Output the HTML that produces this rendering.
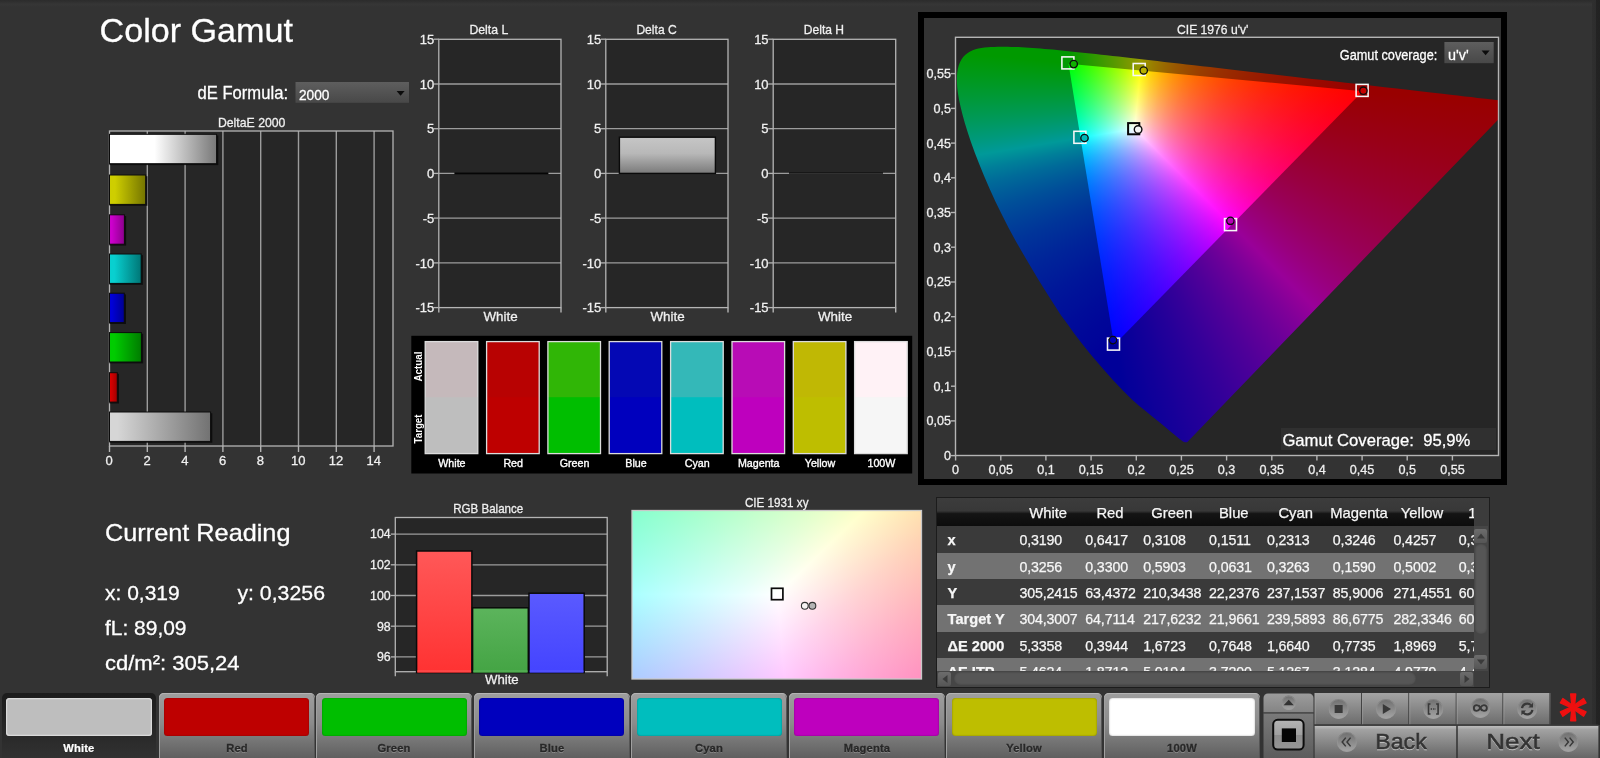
<!DOCTYPE html>
<html lang="en"><head><meta charset="utf-8"><title>Color Gamut</title><style>
html,body{margin:0;padding:0}
body{background:#333;width:1600px;height:758px;position:relative;overflow:hidden;font-family:"Liberation Sans",sans-serif}
#topstrip{position:absolute;left:0;top:0;width:1600px;height:7px;background:linear-gradient(#2c2c2c,#2f2f2f 25%,#363636 60%,#333)}
#rs1{position:absolute;left:1592px;top:0;width:8px;height:725px;background:linear-gradient(90deg,#2f2f2f,#2d2d2d 45%,#232323 55%,#222)}
#ciebox{position:absolute;left:918.3px;top:11.9px;width:588.4px;height:473.4px;background:#000}
#ciebox div{position:absolute;left:5.9px;top:5.7px;width:576.4px;height:461.6px;background:#333}
#c76,#c31{position:absolute;background:#262626;overflow:hidden}
.iso{position:absolute;left:0;top:0;width:100%;height:100%;isolation:isolate;background:#000}
.ch{position:absolute;left:0;top:0;width:100%;height:100%;mix-blend-mode:screen}
.cg{position:absolute;left:0;top:0;width:100%;height:100%}
#tblbox{position:absolute;left:936px;top:497.2px;width:553.7px;height:190.6px;background:#3c3c3c;border:1.5px solid #1c1c1c;box-sizing:border-box;overflow:hidden}
#tbl{position:absolute;left:0;top:0;width:536.5px;height:172.6px;overflow:hidden;white-space:nowrap;font-size:14.2px;color:#f6f6f6;-webkit-text-stroke:.25px #f6f6f6;will-change:transform}
#tbl>div{height:26.4px;line-height:29.4px;white-space:nowrap;width:700px}
#tbl .th{height:28.2px;line-height:30.4px;background:linear-gradient(#3c3c3c,#383838 46%,#141414 56%,#0c0c0c);font-size:14.8px}
#tbl span{display:inline-block;box-sizing:border-box;vertical-align:top}
#tbl .rl{width:78.2px;padding-left:10.6px;font-weight:bold;font-size:14.6px;letter-spacing:0}
#tbl .hc{text-align:center}
#tbl .tc{padding-left:4.2px;letter-spacing:-.12px}
#tbl .dk{background:#3a3a3a}
#tbl .lt{background:#727272}
#vs{position:absolute;left:536.5px;top:28.2px;width:14.5px;height:144.4px;background:#464646}
#hs{position:absolute;left:0;top:172.5px;width:536.5px;height:16px;background:#464646}
#vs .sb,#hs .sb{position:absolute;width:13px;height:14px;background:linear-gradient(#6c6c6c,#565656);border-radius:2px;overflow:hidden}
#vs .sb{left:.7px}
#vs .thumb{position:absolute;left:1.2px;width:12px;background:#565656;border-radius:5px;box-shadow:inset 0 0 2px #3a3a3a}
#hs .thumb{position:absolute;background:#565656;border-radius:6px;box-shadow:inset 0 0 2px #3a3a3a}
.pb{position:absolute;top:693.4px;width:156px;height:66px;border-radius:5px 5px 0 0;background:linear-gradient(#9e9e9e,#8c8c8c 45%,#5e5e5e);box-shadow:inset 0 1px 0 #b4b4b4,inset 1px 0 0 #a0a0a0,inset -1px 0 0 #555}
.pb.sel{margin-left:1.2px;width:153.6px;background:linear-gradient(#1c1c1c,#262626 50%,#323232);box-shadow:none}
.ps{position:absolute;left:5.6px;top:5.1px;width:145.2px;height:37.7px;border-radius:3.5px;box-shadow:inset 0 0 2px rgba(0,0,0,.35)}
.pb.sel .ps{left:3.8px;top:5.1px;width:146px;height:37.7px;box-shadow:inset 0 0 0 1.2px #dadada}
.pl{will-change:transform;position:absolute;left:0;width:100%;top:47.4px;text-align:center;font-weight:bold;font-size:11.2px;line-height:14px;color:#282828;-webkit-text-stroke:.3px #282828;text-shadow:0 1px 0 rgba(190,190,190,.5);letter-spacing:.15px}
.pb.sel .pl{color:#fff;-webkit-text-stroke:.2px #fff;text-shadow:none}
</style></head><body>
<div id="topstrip"></div><div id="rs1"></div>
<div id="ciebox"><div></div></div>
<div id="c76" style="left:955.5px;top:37.3px;width:543.0px;height:418.2px">
<div class="iso" style="clip-path:polygon(232.1px 404.5px,232.0px 404.6px,231.8px 404.7px,231.5px 404.9px,230.9px 405.0px,230.3px 405.0px,229.5px 404.9px,228.5px 404.6px,227.4px 404.1px,226.2px 403.3px,224.8px 402.2px,223.1px 400.9px,221.1px 399.2px,218.7px 397.3px,215.9px 394.9px,212.6px 392.1px,208.8px 389.0px,204.6px 385.4px,199.9px 381.6px,194.9px 377.6px,189.5px 373.3px,183.2px 368.2px,175.9px 361.6px,166.9px 352.7px,156.5px 341.6px,145.5px 329.2px,135.0px 316.9px,126.0px 305.7px,118.5px 295.9px,112.0px 286.6px,105.6px 278.2px,98.7px 267.5px,91.2px 255.7px,83.4px 243.1px,75.5px 230.0px,67.7px 216.8px,60.2px 203.6px,53.0px 190.4px,46.3px 177.3px,39.9px 164.2px,34.1px 151.4px,28.7px 138.9px,23.8px 127.0px,19.4px 115.6px,15.5px 104.9px,12.1px 94.8px,9.3px 85.6px,6.9px 77.0px,5.0px 69.2px,3.5px 62.2px,2.4px 55.7px,1.7px 49.9px,1.4px 44.6px,1.4px 39.8px,1.7px 35.4px,2.4px 31.5px,3.3px 28.0px,4.6px 24.8px,6.1px 22.0px,7.9px 19.5px,9.9px 17.4px,12.2px 15.6px,14.6px 14.1px,17.2px 12.9px,20.0px 11.9px,22.8px 11.2px,25.9px 10.7px,29.0px 10.3px,32.2px 10.0px,35.4px 9.8px,38.8px 9.6px,42.2px 9.5px,45.6px 9.5px,49.0px 9.5px,52.3px 9.5px,55.8px 9.6px,59.2px 9.7px,62.7px 9.8px,66.2px 10.0px,69.8px 10.2px,73.5px 10.4px,77.3px 10.7px,81.1px 10.9px,85.0px 11.2px,89.0px 11.6px,93.1px 11.9px,97.3px 12.3px,101.6px 12.7px,106.0px 13.2px,110.5px 13.6px,115.1px 14.1px,119.9px 14.6px,124.8px 15.1px,129.8px 15.6px,135.0px 16.2px,140.3px 16.8px,145.8px 17.4px,151.3px 18.0px,157.1px 18.7px,163.0px 19.3px,169.1px 20.0px,175.3px 20.7px,181.7px 21.4px,188.3px 22.2px,195.0px 22.9px,201.9px 23.7px,208.9px 24.6px,216.1px 25.4px,223.5px 26.2px,231.0px 27.1px,238.7px 28.0px,246.6px 28.9px,254.6px 29.8px,262.7px 30.7px,271.0px 31.7px,279.4px 32.7px,287.9px 33.6px,296.5px 34.6px,305.2px 35.6px,313.9px 36.6px,322.7px 37.6px,331.3px 38.6px,339.8px 39.6px,348.2px 40.6px,356.7px 41.6px,365.2px 42.5px,373.8px 43.5px,382.3px 44.5px,390.4px 45.4px,397.7px 46.3px,404.3px 47.0px,411.1px 47.8px,419.1px 48.7px,429.3px 49.9px,441.4px 51.3px,454.3px 52.8px,466.7px 54.2px,477.7px 55.5px,486.9px 56.5px,495.0px 57.4px,502.3px 58.3px,509.2px 59.1px,515.8px 59.8px,522.0px 60.6px,527.5px 61.2px,532.4px 61.8px,536.7px 62.2px,540.4px 62.7px,543.6px 63.0px,552.9px 63.0px,563.2px 60.9px)">
<div class="ch" style="background:rgb(153,0,0)"><div class="cg" style="clip-path:polygon(180.5px 93.1px,645.5px -4886.4px,-5309.5px -5019.8px,-4753.4px 912.2px);background:conic-gradient(from 178.076deg at 158.57px 307.56px,rgb(0,0,0) 172.720deg,rgb(4,0,0) 173.182deg,rgb(8,0,0) 173.654deg,rgb(12,0,0) 174.136deg,rgb(16,0,0) 174.630deg,rgb(21,0,0) 175.134deg,rgb(25,0,0) 175.650deg,rgb(30,0,0) 176.178deg,rgb(35,0,0) 176.718deg,rgb(40,0,0) 177.270deg,rgb(46,0,0) 177.835deg,rgb(51,0,0) 178.414deg,rgb(57,0,0) 179.005deg,rgb(63,0,0) 179.611deg,rgb(70,0,0) 180.230deg,rgb(76,0,0) 180.864deg,rgb(83,0,0) 181.513deg,rgb(90,0,0) 182.177deg,rgb(98,0,0) 182.857deg,rgb(106,0,0) 183.552deg,rgb(115,0,0) 184.264deg,rgb(123,0,0) 184.992deg,rgb(133,0,0) 185.737deg,rgb(143,0,0) 186.500deg,rgb(153,0,0) 187.280deg)"></div><div class="cg" style="clip-path:polygon(178.8px 91.8px,3723.3px 3618.4px,-2103.2px 7236.2px,-4753.7px 910.7px);background:conic-gradient(from 332.826deg at 113.01px 26.36px,rgb(153,0,0) 162.029deg,rgb(127,0,0) 166.073deg,rgb(107,0,0) 169.639deg,rgb(92,0,0) 172.785deg,rgb(79,0,0) 175.563deg,rgb(69,0,0) 178.025deg,rgb(60,0,0) 180.213deg,rgb(52,0,0) 182.166deg,rgb(46,0,0) 183.915deg,rgb(40,0,0) 185.488deg,rgb(35,0,0) 186.908deg,rgb(31,0,0) 188.196deg,rgb(27,0,0) 189.367deg,rgb(23,0,0) 190.436deg,rgb(20,0,0) 191.415deg,rgb(17,0,0) 192.314deg,rgb(15,0,0) 193.143deg,rgb(12,0,0) 193.908deg,rgb(10,0,0) 194.618deg,rgb(8,0,0) 195.277deg,rgb(6,0,0) 195.890deg,rgb(5,0,0) 196.463deg,rgb(3,0,0) 196.998deg,rgb(1,0,0) 197.500deg,rgb(0,0,0) 197.971deg)"></div></div>
<div class="ch" style="background:rgb(0,153,0)"><div class="cg" style="clip-path:polygon(176.7px 91.8px,645.5px -4886.4px,7231.2px -2460.4px,3722.2px 3619.5px);background:conic-gradient(from 204.891deg at 158.57px 307.56px,rgb(0,153,0) 160.464deg,rgb(0,125,0) 162.902deg,rgb(0,104,0) 165.277deg,rgb(0,87,0) 167.583deg,rgb(0,75,0) 169.818deg,rgb(0,64,0) 171.977deg,rgb(0,56,0) 174.058deg,rgb(0,48,0) 176.061deg,rgb(0,42,0) 177.986deg,rgb(0,37,0) 179.831deg,rgb(0,32,0) 181.600deg,rgb(0,28,0) 183.293deg,rgb(0,24,0) 184.912deg,rgb(0,21,0) 186.460deg,rgb(0,18,0) 187.939deg,rgb(0,16,0) 189.351deg,rgb(0,13,0) 190.700deg,rgb(0,11,0) 191.989deg,rgb(0,9,0) 193.219deg,rgb(0,7,0) 194.395deg,rgb(0,6,0) 195.517deg,rgb(0,4,0) 196.591deg,rgb(0,3,0) 197.616deg,rgb(0,1,0) 198.597deg,rgb(0,0,0) 199.536deg)"></div><div class="cg" style="clip-path:polygon(178.8px 91.8px,-4753.7px 910.7px,-2103.2px 7236.2px,3723.3px 3618.4px);background:conic-gradient(from 62.500deg at 407.22px 53.89px,rgb(0,0,0) 161.927deg,rgb(0,1,0) 162.863deg,rgb(0,3,0) 163.838deg,rgb(0,5,0) 164.851deg,rgb(0,6,0) 165.907deg,rgb(0,8,0) 167.006deg,rgb(0,10,0) 168.150deg,rgb(0,12,0) 169.341deg,rgb(0,15,0) 170.581deg,rgb(0,17,0) 171.871deg,rgb(0,20,0) 173.215deg,rgb(0,23,0) 174.612deg,rgb(0,27,0) 176.066deg,rgb(0,31,0) 177.576deg,rgb(0,35,0) 179.146deg,rgb(0,40,0) 180.775deg,rgb(0,46,0) 182.464deg,rgb(0,52,0) 184.213deg,rgb(0,60,0) 186.023deg,rgb(0,69,0) 187.892deg,rgb(0,79,0) 189.821deg,rgb(0,92,0) 191.805deg,rgb(0,107,0) 193.845deg,rgb(0,127,0) 195.935deg,rgb(0,153,0) 198.073deg)"></div></div>
<div class="ch" style="background:rgb(0,0,153)"><div class="cg" style="clip-path:polygon(177.2px 93.2px,3723.3px 3618.4px,7231.2px -2460.4px,644.0px -4886.5px);background:conic-gradient(from 295.100deg at 113.01px 26.36px,rgb(0,0,0) 160.245deg,rgb(0,0,1) 160.738deg,rgb(0,0,3) 161.264deg,rgb(0,0,4) 161.826deg,rgb(0,0,6) 162.428deg,rgb(0,0,7) 163.075deg,rgb(0,0,9) 163.772deg,rgb(0,0,11) 164.524deg,rgb(0,0,13) 165.337deg,rgb(0,0,16) 166.221deg,rgb(0,0,18) 167.182deg,rgb(0,0,21) 168.232deg,rgb(0,0,24) 169.382deg,rgb(0,0,28) 170.647deg,rgb(0,0,32) 172.043deg,rgb(0,0,37) 173.590deg,rgb(0,0,42) 175.311deg,rgb(0,0,48) 177.232deg,rgb(0,0,56) 179.387deg,rgb(0,0,64) 181.814deg,rgb(0,0,75) 184.556deg,rgb(0,0,87) 187.664deg,rgb(0,0,104) 191.194deg,rgb(0,0,125) 195.205deg,rgb(0,0,153) 199.755deg)"></div><div class="cg" style="clip-path:polygon(178.8px 91.8px,-4753.7px 910.7px,-5309.5px -5019.8px,645.5px -4886.4px);background:conic-gradient(from 87.960deg at 407.22px 53.89px,rgb(0,0,153) 172.614deg,rgb(0,0,143) 173.383deg,rgb(0,0,133) 174.137deg,rgb(0,0,123) 174.877deg,rgb(0,0,115) 175.602deg,rgb(0,0,106) 176.312deg,rgb(0,0,98) 177.008deg,rgb(0,0,90) 177.691deg,rgb(0,0,83) 178.359deg,rgb(0,0,76) 179.015deg,rgb(0,0,70) 179.656deg,rgb(0,0,63) 180.285deg,rgb(0,0,57) 180.901deg,rgb(0,0,51) 181.505deg,rgb(0,0,46) 182.096deg,rgb(0,0,40) 182.675deg,rgb(0,0,35) 183.242deg,rgb(0,0,30) 183.798deg,rgb(0,0,25) 184.343deg,rgb(0,0,21) 184.876deg,rgb(0,0,16) 185.399deg,rgb(0,0,12) 185.911deg,rgb(0,0,8) 186.413deg,rgb(0,0,4) 186.904deg,rgb(0,0,0) 187.386deg)"></div></div>
</div>
<div class="iso" style="clip-path:polygon(407.2px 53.9px,113.0px 26.4px,158.6px 307.6px)">
<div class="ch" style="background:rgb(255,0,0)"><div class="cg" style="clip-path:polygon(180.5px 93.1px,645.5px -4886.4px,-5309.5px -5019.8px,-4753.4px 912.2px);background:conic-gradient(from 178.076deg at 158.57px 307.56px,rgb(0,0,0) 172.720deg,rgb(6,0,0) 173.182deg,rgb(13,0,0) 173.654deg,rgb(20,0,0) 174.136deg,rgb(27,0,0) 174.630deg,rgb(35,0,0) 175.134deg,rgb(42,0,0) 175.650deg,rgb(50,0,0) 176.178deg,rgb(58,0,0) 176.718deg,rgb(67,0,0) 177.270deg,rgb(76,0,0) 177.835deg,rgb(85,0,0) 178.414deg,rgb(95,0,0) 179.005deg,rgb(105,0,0) 179.611deg,rgb(116,0,0) 180.230deg,rgb(127,0,0) 180.864deg,rgb(139,0,0) 181.513deg,rgb(151,0,0) 182.177deg,rgb(163,0,0) 182.857deg,rgb(177,0,0) 183.552deg,rgb(191,0,0) 184.264deg,rgb(206,0,0) 184.992deg,rgb(221,0,0) 185.737deg,rgb(238,0,0) 186.500deg,rgb(255,0,0) 187.280deg)"></div><div class="cg" style="clip-path:polygon(178.8px 91.8px,3723.3px 3618.4px,-2103.2px 7236.2px,-4753.7px 910.7px);background:conic-gradient(from 332.826deg at 113.01px 26.36px,rgb(255,0,0) 162.029deg,rgb(212,0,0) 166.073deg,rgb(179,0,0) 169.639deg,rgb(153,0,0) 172.785deg,rgb(132,0,0) 175.563deg,rgb(114,0,0) 178.025deg,rgb(100,0,0) 180.213deg,rgb(87,0,0) 182.166deg,rgb(76,0,0) 183.915deg,rgb(67,0,0) 185.488deg,rgb(59,0,0) 186.908deg,rgb(51,0,0) 188.196deg,rgb(45,0,0) 189.367deg,rgb(39,0,0) 190.436deg,rgb(34,0,0) 191.415deg,rgb(29,0,0) 192.314deg,rgb(25,0,0) 193.143deg,rgb(21,0,0) 193.908deg,rgb(17,0,0) 194.618deg,rgb(14,0,0) 195.277deg,rgb(10,0,0) 195.890deg,rgb(8,0,0) 196.463deg,rgb(5,0,0) 196.998deg,rgb(2,0,0) 197.500deg,rgb(0,0,0) 197.971deg)"></div></div>
<div class="ch" style="background:rgb(0,255,0)"><div class="cg" style="clip-path:polygon(176.7px 91.8px,645.5px -4886.4px,7231.2px -2460.4px,3722.2px 3619.5px);background:conic-gradient(from 204.891deg at 158.57px 307.56px,rgb(0,255,0) 160.464deg,rgb(0,208,0) 162.902deg,rgb(0,173,0) 165.277deg,rgb(0,146,0) 167.583deg,rgb(0,124,0) 169.818deg,rgb(0,107,0) 171.977deg,rgb(0,93,0) 174.058deg,rgb(0,81,0) 176.061deg,rgb(0,70,0) 177.986deg,rgb(0,61,0) 179.831deg,rgb(0,54,0) 181.600deg,rgb(0,47,0) 183.293deg,rgb(0,41,0) 184.912deg,rgb(0,35,0) 186.460deg,rgb(0,31,0) 187.939deg,rgb(0,26,0) 189.351deg,rgb(0,22,0) 190.700deg,rgb(0,19,0) 191.989deg,rgb(0,15,0) 193.219deg,rgb(0,12,0) 194.395deg,rgb(0,9,0) 195.517deg,rgb(0,7,0) 196.591deg,rgb(0,4,0) 197.616deg,rgb(0,2,0) 198.597deg,rgb(0,0,0) 199.536deg)"></div><div class="cg" style="clip-path:polygon(178.8px 91.8px,-4753.7px 910.7px,-2103.2px 7236.2px,3723.3px 3618.4px);background:conic-gradient(from 62.500deg at 407.22px 53.89px,rgb(0,0,0) 161.927deg,rgb(0,2,0) 162.863deg,rgb(0,5,0) 163.838deg,rgb(0,8,0) 164.851deg,rgb(0,10,0) 165.907deg,rgb(0,14,0) 167.006deg,rgb(0,17,0) 168.150deg,rgb(0,21,0) 169.341deg,rgb(0,25,0) 170.581deg,rgb(0,29,0) 171.871deg,rgb(0,34,0) 173.215deg,rgb(0,39,0) 174.612deg,rgb(0,45,0) 176.066deg,rgb(0,51,0) 177.576deg,rgb(0,59,0) 179.146deg,rgb(0,67,0) 180.775deg,rgb(0,76,0) 182.464deg,rgb(0,87,0) 184.213deg,rgb(0,100,0) 186.023deg,rgb(0,114,0) 187.892deg,rgb(0,132,0) 189.821deg,rgb(0,153,0) 191.805deg,rgb(0,179,0) 193.845deg,rgb(0,212,0) 195.935deg,rgb(0,255,0) 198.073deg)"></div></div>
<div class="ch" style="background:rgb(0,0,255)"><div class="cg" style="clip-path:polygon(177.2px 93.2px,3723.3px 3618.4px,7231.2px -2460.4px,644.0px -4886.5px);background:conic-gradient(from 295.100deg at 113.01px 26.36px,rgb(0,0,0) 160.245deg,rgb(0,0,2) 160.738deg,rgb(0,0,4) 161.264deg,rgb(0,0,7) 161.826deg,rgb(0,0,9) 162.428deg,rgb(0,0,12) 163.075deg,rgb(0,0,15) 163.772deg,rgb(0,0,19) 164.524deg,rgb(0,0,22) 165.337deg,rgb(0,0,26) 166.221deg,rgb(0,0,31) 167.182deg,rgb(0,0,35) 168.232deg,rgb(0,0,41) 169.382deg,rgb(0,0,47) 170.647deg,rgb(0,0,54) 172.043deg,rgb(0,0,61) 173.590deg,rgb(0,0,70) 175.311deg,rgb(0,0,81) 177.232deg,rgb(0,0,93) 179.387deg,rgb(0,0,107) 181.814deg,rgb(0,0,124) 184.556deg,rgb(0,0,146) 187.664deg,rgb(0,0,173) 191.194deg,rgb(0,0,208) 195.205deg,rgb(0,0,255) 199.755deg)"></div><div class="cg" style="clip-path:polygon(178.8px 91.8px,-4753.7px 910.7px,-5309.5px -5019.8px,645.5px -4886.4px);background:conic-gradient(from 87.960deg at 407.22px 53.89px,rgb(0,0,255) 172.614deg,rgb(0,0,238) 173.383deg,rgb(0,0,221) 174.137deg,rgb(0,0,206) 174.877deg,rgb(0,0,191) 175.602deg,rgb(0,0,177) 176.312deg,rgb(0,0,163) 177.008deg,rgb(0,0,151) 177.691deg,rgb(0,0,139) 178.359deg,rgb(0,0,127) 179.015deg,rgb(0,0,116) 179.656deg,rgb(0,0,105) 180.285deg,rgb(0,0,95) 180.901deg,rgb(0,0,85) 181.505deg,rgb(0,0,76) 182.096deg,rgb(0,0,67) 182.675deg,rgb(0,0,59) 183.242deg,rgb(0,0,50) 183.798deg,rgb(0,0,42) 184.343deg,rgb(0,0,35) 184.876deg,rgb(0,0,27) 185.399deg,rgb(0,0,20) 185.911deg,rgb(0,0,13) 186.413deg,rgb(0,0,6) 186.904deg,rgb(0,0,0) 187.386deg)"></div></div>
</div>
</div>
<div id="c31" style="left:632.0px;top:510.5px;width:289.5px;height:168.5px">
<div class="iso">
<div class="ch" style="background:rgb(255,0,0)"><div class="cg" style="clip-path:polygon(146.6px 85.0px,3747.8px -3383.4px,-2664.6px -6870.3px,-4854.9px 93.9px);background:conic-gradient(from 215.807deg at -796.98px 990.08px,rgb(0,0,0) 169.706deg,rgb(4,0,0) 170.260deg,rgb(9,0,0) 170.832deg,rgb(14,0,0) 171.423deg,rgb(19,0,0) 172.035deg,rgb(24,0,0) 172.668deg,rgb(29,0,0) 173.323deg,rgb(35,0,0) 174.001deg,rgb(42,0,0) 174.704deg,rgb(49,0,0) 175.432deg,rgb(56,0,0) 176.187deg,rgb(64,0,0) 176.970deg,rgb(72,0,0) 177.781deg,rgb(81,0,0) 178.623deg,rgb(90,0,0) 179.497deg,rgb(101,0,0) 180.403deg,rgb(112,0,0) 181.344deg,rgb(124,0,0) 182.321deg,rgb(138,0,0) 183.336deg,rgb(153,0,0) 184.389deg,rgb(169,0,0) 185.483deg,rgb(187,0,0) 186.619deg,rgb(207,0,0) 187.798deg,rgb(229,0,0) 189.023deg,rgb(255,0,0) 190.294deg)"></div><div class="cg" style="clip-path:polygon(145.0px 83.5px,546.3px 5067.4px,-4936.1px 5600.1px,-4854.9px 92.4px);background:conic-gradient(from 10.455deg at 71.52px -829.72px,rgb(255,0,0) 164.942deg,rgb(230,0,0) 167.481deg,rgb(207,0,0) 169.833deg,rgb(187,0,0) 172.012deg,rgb(169,0,0) 174.029deg,rgb(153,0,0) 175.899deg,rgb(138,0,0) 177.633deg,rgb(125,0,0) 179.242deg,rgb(113,0,0) 180.737deg,rgb(101,0,0) 182.128deg,rgb(91,0,0) 183.424deg,rgb(81,0,0) 184.633deg,rgb(72,0,0) 185.763deg,rgb(64,0,0) 186.821deg,rgb(56,0,0) 187.812deg,rgb(49,0,0) 188.742deg,rgb(42,0,0) 189.616deg,rgb(36,0,0) 190.439deg,rgb(30,0,0) 191.214deg,rgb(24,0,0) 191.946deg,rgb(19,0,0) 192.637deg,rgb(14,0,0) 193.292deg,rgb(9,0,0) 193.912deg,rgb(4,0,0) 194.500deg,rgb(0,0,0) 195.058deg)"></div></div>
<div class="ch" style="background:rgb(0,255,0)"><div class="cg" style="clip-path:polygon(143.4px 82.2px,3747.8px -3383.4px,7158.6px 2740.5px,544.8px 5067.5px);background:conic-gradient(from 239.159deg at -796.98px 990.08px,rgb(0,255,0) 166.941deg,rgb(0,212,0) 169.235deg,rgb(0,179,0) 171.338deg,rgb(0,152,0) 173.269deg,rgb(0,131,0) 175.044deg,rgb(0,114,0) 176.678deg,rgb(0,99,0) 178.185deg,rgb(0,87,0) 179.578deg,rgb(0,76,0) 180.866deg,rgb(0,67,0) 182.061deg,rgb(0,58,0) 183.172deg,rgb(0,51,0) 184.206deg,rgb(0,45,0) 185.170deg,rgb(0,39,0) 186.070deg,rgb(0,34,0) 186.913deg,rgb(0,29,0) 187.704deg,rgb(0,24,0) 188.446deg,rgb(0,21,0) 189.144deg,rgb(0,17,0) 189.802deg,rgb(0,14,0) 190.422deg,rgb(0,10,0) 191.008deg,rgb(0,8,0) 191.562deg,rgb(0,5,0) 192.088deg,rgb(0,2,0) 192.586deg,rgb(0,0,0) 193.059deg)"></div><div class="cg" style="clip-path:polygon(145.0px 83.5px,-4854.9px 92.4px,-4936.1px 5600.1px,546.3px 5067.4px);background:conic-gradient(from 81.058deg at 2040.12px 80.18px,rgb(0,0,0) 171.160deg,rgb(0,4,0) 171.629deg,rgb(0,9,0) 172.114deg,rgb(0,14,0) 172.615deg,rgb(0,19,0) 173.134deg,rgb(0,24,0) 173.670deg,rgb(0,30,0) 174.226deg,rgb(0,36,0) 174.802deg,rgb(0,42,0) 175.399deg,rgb(0,49,0) 176.018deg,rgb(0,56,0) 176.660deg,rgb(0,64,0) 177.327deg,rgb(0,72,0) 178.019deg,rgb(0,81,0) 178.737deg,rgb(0,91,0) 179.484deg,rgb(0,101,0) 180.260deg,rgb(0,113,0) 181.067deg,rgb(0,125,0) 181.907deg,rgb(0,138,0) 182.780deg,rgb(0,153,0) 183.690deg,rgb(0,169,0) 184.637deg,rgb(0,187,0) 185.624deg,rgb(0,207,0) 186.652deg,rgb(0,230,0) 187.723deg,rgb(0,255,0) 188.840deg)"></div></div>
<div class="ch" style="background:rgb(0,0,255)"><div class="cg" style="clip-path:polygon(142.9px 83.5px,546.3px 5067.4px,7158.6px 2740.5px,3746.8px -3384.5px);background:conic-gradient(from 325.102deg at 71.52px -829.72px,rgb(0,0,0) 149.705deg,rgb(0,0,2) 150.614deg,rgb(0,0,5) 151.586deg,rgb(0,0,8) 152.628deg,rgb(0,0,10) 153.748deg,rgb(0,0,13) 154.952deg,rgb(0,0,17) 156.251deg,rgb(0,0,20) 157.653deg,rgb(0,0,24) 159.170deg,rgb(0,0,29) 160.815deg,rgb(0,0,34) 162.601deg,rgb(0,0,39) 164.542deg,rgb(0,0,45) 166.656deg,rgb(0,0,51) 168.959deg,rgb(0,0,58) 171.471deg,rgb(0,0,67) 174.208deg,rgb(0,0,76) 177.189deg,rgb(0,0,87) 180.430deg,rgb(0,0,99) 183.942deg,rgb(0,0,114) 187.731deg,rgb(0,0,131) 191.794deg,rgb(0,0,152) 196.118deg,rgb(0,0,179) 200.673deg,rgb(0,0,212) 205.417deg,rgb(0,0,255) 210.295deg)"></div><div class="cg" style="clip-path:polygon(145.0px 83.5px,-4854.9px 92.4px,-2664.6px -6870.3px,3747.8px -3383.4px);background:conic-gradient(from 102.352deg at 2040.12px 80.18px,rgb(0,0,255) 167.546deg,rgb(0,0,230) 168.694deg,rgb(0,0,207) 169.839deg,rgb(0,0,187) 170.977deg,rgb(0,0,169) 172.110deg,rgb(0,0,153) 173.235deg,rgb(0,0,138) 174.353deg,rgb(0,0,124) 175.461deg,rgb(0,0,112) 176.561deg,rgb(0,0,101) 177.650deg,rgb(0,0,90) 178.729deg,rgb(0,0,81) 179.796deg,rgb(0,0,72) 180.852deg,rgb(0,0,64) 181.895deg,rgb(0,0,56) 182.926deg,rgb(0,0,49) 183.943deg,rgb(0,0,42) 184.947deg,rgb(0,0,35) 185.936deg,rgb(0,0,29) 186.912deg,rgb(0,0,24) 187.873deg,rgb(0,0,19) 188.819deg,rgb(0,0,14) 189.750deg,rgb(0,0,9) 190.667deg,rgb(0,0,4) 191.568deg,rgb(0,0,0) 192.454deg)"></div></div>
</div></div>
<svg width="1600" height="758" viewBox="0 0 1600 758" style="position:absolute;left:0;top:0;will-change:transform;font-family:'Liberation Sans',sans-serif"><defs><linearGradient id="dd" x1="0" y1="0" x2="0" y2="1"><stop offset="0" stop-color="#5e5e5e"/><stop offset="1" stop-color="#484848"/></linearGradient><linearGradient id="bw" x1="0" y1="0" x2="1" y2="0"><stop offset="0" stop-color="#ffffff"/><stop offset="0.42" stop-color="#ffffff"/><stop offset="1" stop-color="#787878"/></linearGradient><linearGradient id="by" x1="0" y1="0" x2="1" y2="0"><stop offset="0" stop-color="#cece00"/><stop offset="0.15" stop-color="#cece00"/><stop offset="1" stop-color="#747400"/></linearGradient><linearGradient id="bm" x1="0" y1="0" x2="1" y2="0"><stop offset="0" stop-color="#cc00cc"/><stop offset="0.15" stop-color="#cc00cc"/><stop offset="1" stop-color="#8c008c"/></linearGradient><linearGradient id="bc" x1="0" y1="0" x2="1" y2="0"><stop offset="0" stop-color="#08d0d0"/><stop offset="0.15" stop-color="#08d0d0"/><stop offset="1" stop-color="#007676"/></linearGradient><linearGradient id="bb" x1="0" y1="0" x2="1" y2="0"><stop offset="0" stop-color="#0000d8"/><stop offset="0.15" stop-color="#0000d8"/><stop offset="1" stop-color="#000090"/></linearGradient><linearGradient id="bg" x1="0" y1="0" x2="1" y2="0"><stop offset="0" stop-color="#00cc00"/><stop offset="0.15" stop-color="#00cc00"/><stop offset="1" stop-color="#007c00"/></linearGradient><linearGradient id="br" x1="0" y1="0" x2="1" y2="0"><stop offset="0" stop-color="#d80000"/><stop offset="0.15" stop-color="#d80000"/><stop offset="1" stop-color="#a00000"/></linearGradient><linearGradient id="bk" x1="0" y1="0" x2="1" y2="0"><stop offset="0" stop-color="#d6d6d6"/><stop offset="0.08" stop-color="#d6d6d6"/><stop offset="1" stop-color="#727272"/></linearGradient><linearGradient id="dcb" x1="0" y1="0" x2="0" y2="1"><stop offset="0" stop-color="#c6c6c6"/><stop offset="0.45" stop-color="#b8b8b8"/><stop offset="1" stop-color="#7a7a7a"/></linearGradient><linearGradient id="rr" x1="0" y1="0" x2="0" y2="1"><stop offset="0" stop-color="#ff5858"/><stop offset="1" stop-color="#ff3232"/></linearGradient><linearGradient id="rg" x1="0" y1="0" x2="0" y2="1"><stop offset="0" stop-color="#5cb45c"/><stop offset="1" stop-color="#44a444"/></linearGradient><linearGradient id="rb" x1="0" y1="0" x2="0" y2="1"><stop offset="0" stop-color="#5a5aff"/><stop offset="1" stop-color="#4444ff"/></linearGradient></defs>
<text x="99.5" y="42.3" font-size="32.5" text-anchor="start" fill="#fff" font-weight="normal" textLength="193.5" lengthAdjust="spacingAndGlyphs" stroke="#fff" stroke-width="0.28">Color Gamut</text>
<text x="197.5" y="99.2" font-size="17.5" text-anchor="start" fill="#fff" font-weight="normal" textLength="90.5" lengthAdjust="spacingAndGlyphs" stroke="#fff" stroke-width="0.28">dE Formula:</text>
<rect x="295.5" y="82" width="113.5" height="20.8" fill="url(#dd)"/>
<text x="299.0" y="99.6" font-size="14.5" text-anchor="start" fill="#fff" font-weight="normal" textLength="30.5" lengthAdjust="spacingAndGlyphs" stroke="#fff" stroke-width="0.28">2000</text>
<path d="M396.6 91h8l-4 4.8z" fill="#0c0c0c"/>
<text x="251.7" y="126.6" font-size="13" text-anchor="middle" fill="#f0f0f0" font-weight="normal" textLength="67.5" lengthAdjust="spacingAndGlyphs" stroke="#f0f0f0" stroke-width="0.28">DeltaE 2000</text>
<rect x="109.5" y="131.0" width="283.5" height="315.0" fill="#262626"/>
<line x1="147.3" y1="131.0" x2="147.3" y2="446.0" stroke="#9c9c9c" stroke-width="1.4"/>
<line x1="185.1" y1="131.0" x2="185.1" y2="446.0" stroke="#9c9c9c" stroke-width="1.4"/>
<line x1="222.9" y1="131.0" x2="222.9" y2="446.0" stroke="#9c9c9c" stroke-width="1.4"/>
<line x1="260.7" y1="131.0" x2="260.7" y2="446.0" stroke="#9c9c9c" stroke-width="1.4"/>
<line x1="298.5" y1="131.0" x2="298.5" y2="446.0" stroke="#9c9c9c" stroke-width="1.4"/>
<line x1="336.3" y1="131.0" x2="336.3" y2="446.0" stroke="#9c9c9c" stroke-width="1.4"/>
<line x1="374.1" y1="131.0" x2="374.1" y2="446.0" stroke="#9c9c9c" stroke-width="1.4"/>
<rect x="109.5" y="131.0" width="283.5" height="315.0" fill="none" stroke="#b4b4b4" stroke-width="1.3"/>
<line x1="109.5" y1="446.0" x2="109.5" y2="452.0" stroke="#b4b4b4" stroke-width="1.4"/>
<text x="109.2" y="465.4" font-size="13" text-anchor="middle" fill="#f0f0f0" font-weight="normal" stroke="#f0f0f0" stroke-width="0.28">0</text>
<line x1="147.3" y1="446.0" x2="147.3" y2="452.0" stroke="#b4b4b4" stroke-width="1.4"/>
<text x="147.0" y="465.4" font-size="13" text-anchor="middle" fill="#f0f0f0" font-weight="normal" stroke="#f0f0f0" stroke-width="0.28">2</text>
<line x1="185.1" y1="446.0" x2="185.1" y2="452.0" stroke="#b4b4b4" stroke-width="1.4"/>
<text x="184.8" y="465.4" font-size="13" text-anchor="middle" fill="#f0f0f0" font-weight="normal" stroke="#f0f0f0" stroke-width="0.28">4</text>
<line x1="222.9" y1="446.0" x2="222.9" y2="452.0" stroke="#b4b4b4" stroke-width="1.4"/>
<text x="222.6" y="465.4" font-size="13" text-anchor="middle" fill="#f0f0f0" font-weight="normal" stroke="#f0f0f0" stroke-width="0.28">6</text>
<line x1="260.7" y1="446.0" x2="260.7" y2="452.0" stroke="#b4b4b4" stroke-width="1.4"/>
<text x="260.4" y="465.4" font-size="13" text-anchor="middle" fill="#f0f0f0" font-weight="normal" stroke="#f0f0f0" stroke-width="0.28">8</text>
<line x1="298.5" y1="446.0" x2="298.5" y2="452.0" stroke="#b4b4b4" stroke-width="1.4"/>
<text x="298.2" y="465.4" font-size="13" text-anchor="middle" fill="#f0f0f0" font-weight="normal" stroke="#f0f0f0" stroke-width="0.28">10</text>
<line x1="336.3" y1="446.0" x2="336.3" y2="452.0" stroke="#b4b4b4" stroke-width="1.4"/>
<text x="336.0" y="465.4" font-size="13" text-anchor="middle" fill="#f0f0f0" font-weight="normal" stroke="#f0f0f0" stroke-width="0.28">12</text>
<line x1="374.1" y1="446.0" x2="374.1" y2="452.0" stroke="#b4b4b4" stroke-width="1.4"/>
<text x="373.8" y="465.4" font-size="13" text-anchor="middle" fill="#f0f0f0" font-weight="normal" stroke="#f0f0f0" stroke-width="0.28">14</text>
<rect x="109.5" y="135.5" width="108.8" height="29.6" fill="#0a0a0a" opacity="0.85"/>
<rect x="109.5" y="134.3" width="107.1" height="29.4" fill="url(#bw)" stroke="#0c0c0c" stroke-width="1"/>
<rect x="109.5" y="176.2" width="37.9" height="29.6" fill="#0a0a0a" opacity="0.85"/>
<rect x="109.5" y="175.0" width="36.2" height="29.4" fill="url(#by)" stroke="#0c0c0c" stroke-width="1"/>
<rect x="109.5" y="216.0" width="16.6" height="29.6" fill="#0a0a0a" opacity="0.85"/>
<rect x="109.5" y="214.8" width="14.9" height="29.4" fill="url(#bm)" stroke="#0c0c0c" stroke-width="1"/>
<rect x="109.5" y="255.2" width="33.4" height="29.6" fill="#0a0a0a" opacity="0.85"/>
<rect x="109.5" y="254.0" width="31.7" height="29.4" fill="url(#bc)" stroke="#0c0c0c" stroke-width="1"/>
<rect x="109.5" y="294.4" width="16.5" height="29.6" fill="#0a0a0a" opacity="0.85"/>
<rect x="109.5" y="293.2" width="14.8" height="29.4" fill="url(#bb)" stroke="#0c0c0c" stroke-width="1"/>
<rect x="109.5" y="333.8" width="33.6" height="29.6" fill="#0a0a0a" opacity="0.85"/>
<rect x="109.5" y="332.6" width="31.9" height="29.4" fill="url(#bg)" stroke="#0c0c0c" stroke-width="1"/>
<rect x="109.5" y="373.9" width="9.5" height="29.6" fill="#0a0a0a" opacity="0.85"/>
<rect x="109.5" y="372.7" width="7.8" height="29.4" fill="url(#br)" stroke="#0c0c0c" stroke-width="1"/>
<rect x="109.5" y="413.2" width="102.8" height="29.6" fill="#0a0a0a" opacity="0.85"/>
<rect x="109.5" y="412.0" width="101.1" height="29.4" fill="url(#bk)" stroke="#0c0c0c" stroke-width="1"/>
<rect x="438.8" y="39.3" width="122.19999999999999" height="268.3" fill="#262626"/>
<line x1="438.8" y1="84.0" x2="561.0" y2="84.0" stroke="#9c9c9c" stroke-width="1.3"/>
<line x1="438.8" y1="128.7" x2="561.0" y2="128.7" stroke="#9c9c9c" stroke-width="1.3"/>
<line x1="438.8" y1="173.4" x2="561.0" y2="173.4" stroke="#9c9c9c" stroke-width="1.3"/>
<line x1="438.8" y1="218.1" x2="561.0" y2="218.1" stroke="#9c9c9c" stroke-width="1.3"/>
<line x1="438.8" y1="262.9" x2="561.0" y2="262.9" stroke="#9c9c9c" stroke-width="1.3"/>
<rect x="438.8" y="39.3" width="122.19999999999999" height="268.3" fill="none" stroke="#b4b4b4" stroke-width="1.3"/>
<line x1="433.8" y1="39.2" x2="438.8" y2="39.2" stroke="#b4b4b4" stroke-width="1.3"/>
<text x="434.2" y="43.8" font-size="13" text-anchor="end" fill="#f0f0f0" font-weight="normal" stroke="#f0f0f0" stroke-width="0.28">15</text>
<line x1="433.8" y1="84.0" x2="438.8" y2="84.0" stroke="#b4b4b4" stroke-width="1.3"/>
<text x="434.2" y="88.5" font-size="13" text-anchor="end" fill="#f0f0f0" font-weight="normal" stroke="#f0f0f0" stroke-width="0.28">10</text>
<line x1="433.8" y1="128.7" x2="438.8" y2="128.7" stroke="#b4b4b4" stroke-width="1.3"/>
<text x="434.2" y="133.3" font-size="13" text-anchor="end" fill="#f0f0f0" font-weight="normal" stroke="#f0f0f0" stroke-width="0.28">5</text>
<line x1="433.8" y1="173.4" x2="438.8" y2="173.4" stroke="#b4b4b4" stroke-width="1.3"/>
<text x="434.2" y="178.0" font-size="13" text-anchor="end" fill="#f0f0f0" font-weight="normal" stroke="#f0f0f0" stroke-width="0.28">0</text>
<line x1="433.8" y1="218.1" x2="438.8" y2="218.1" stroke="#b4b4b4" stroke-width="1.3"/>
<text x="434.2" y="222.7" font-size="13" text-anchor="end" fill="#f0f0f0" font-weight="normal" stroke="#f0f0f0" stroke-width="0.28">-5</text>
<line x1="433.8" y1="262.9" x2="438.8" y2="262.9" stroke="#b4b4b4" stroke-width="1.3"/>
<text x="434.2" y="267.5" font-size="13" text-anchor="end" fill="#f0f0f0" font-weight="normal" stroke="#f0f0f0" stroke-width="0.28">-10</text>
<line x1="433.8" y1="307.6" x2="438.8" y2="307.6" stroke="#b4b4b4" stroke-width="1.3"/>
<text x="434.2" y="312.2" font-size="13" text-anchor="end" fill="#f0f0f0" font-weight="normal" stroke="#f0f0f0" stroke-width="0.28">-15</text>
<line x1="438.8" y1="307.6" x2="438.8" y2="312.6" stroke="#b4b4b4" stroke-width="1.4"/>
<line x1="561.0" y1="307.6" x2="561.0" y2="312.6" stroke="#b4b4b4" stroke-width="1.4"/>
<text x="469.4" y="34.3" font-size="13.2" text-anchor="start" fill="#f0f0f0" font-weight="normal" textLength="38.9" lengthAdjust="spacingAndGlyphs" stroke="#f0f0f0" stroke-width="0.28">Delta L</text>
<text x="500.5" y="321.3" font-size="13.4" text-anchor="middle" fill="#f0f0f0" font-weight="normal" stroke="#f0f0f0" stroke-width="0.28">White</text>
<rect x="454.4" y="172.3" width="94" height="2.0" fill="#050505"/>
<rect x="605.8" y="39.3" width="122.20000000000005" height="268.3" fill="#262626"/>
<line x1="605.8" y1="84.0" x2="728.0" y2="84.0" stroke="#9c9c9c" stroke-width="1.3"/>
<line x1="605.8" y1="128.7" x2="728.0" y2="128.7" stroke="#9c9c9c" stroke-width="1.3"/>
<line x1="605.8" y1="173.4" x2="728.0" y2="173.4" stroke="#9c9c9c" stroke-width="1.3"/>
<line x1="605.8" y1="218.1" x2="728.0" y2="218.1" stroke="#9c9c9c" stroke-width="1.3"/>
<line x1="605.8" y1="262.9" x2="728.0" y2="262.9" stroke="#9c9c9c" stroke-width="1.3"/>
<rect x="605.8" y="39.3" width="122.20000000000005" height="268.3" fill="none" stroke="#b4b4b4" stroke-width="1.3"/>
<line x1="600.8" y1="39.2" x2="605.8" y2="39.2" stroke="#b4b4b4" stroke-width="1.3"/>
<text x="601.2" y="43.8" font-size="13" text-anchor="end" fill="#f0f0f0" font-weight="normal" stroke="#f0f0f0" stroke-width="0.28">15</text>
<line x1="600.8" y1="84.0" x2="605.8" y2="84.0" stroke="#b4b4b4" stroke-width="1.3"/>
<text x="601.2" y="88.5" font-size="13" text-anchor="end" fill="#f0f0f0" font-weight="normal" stroke="#f0f0f0" stroke-width="0.28">10</text>
<line x1="600.8" y1="128.7" x2="605.8" y2="128.7" stroke="#b4b4b4" stroke-width="1.3"/>
<text x="601.2" y="133.3" font-size="13" text-anchor="end" fill="#f0f0f0" font-weight="normal" stroke="#f0f0f0" stroke-width="0.28">5</text>
<line x1="600.8" y1="173.4" x2="605.8" y2="173.4" stroke="#b4b4b4" stroke-width="1.3"/>
<text x="601.2" y="178.0" font-size="13" text-anchor="end" fill="#f0f0f0" font-weight="normal" stroke="#f0f0f0" stroke-width="0.28">0</text>
<line x1="600.8" y1="218.1" x2="605.8" y2="218.1" stroke="#b4b4b4" stroke-width="1.3"/>
<text x="601.2" y="222.7" font-size="13" text-anchor="end" fill="#f0f0f0" font-weight="normal" stroke="#f0f0f0" stroke-width="0.28">-5</text>
<line x1="600.8" y1="262.9" x2="605.8" y2="262.9" stroke="#b4b4b4" stroke-width="1.3"/>
<text x="601.2" y="267.5" font-size="13" text-anchor="end" fill="#f0f0f0" font-weight="normal" stroke="#f0f0f0" stroke-width="0.28">-10</text>
<line x1="600.8" y1="307.6" x2="605.8" y2="307.6" stroke="#b4b4b4" stroke-width="1.3"/>
<text x="601.2" y="312.2" font-size="13" text-anchor="end" fill="#f0f0f0" font-weight="normal" stroke="#f0f0f0" stroke-width="0.28">-15</text>
<line x1="605.8" y1="307.6" x2="605.8" y2="312.6" stroke="#b4b4b4" stroke-width="1.4"/>
<line x1="728.0" y1="307.6" x2="728.0" y2="312.6" stroke="#b4b4b4" stroke-width="1.4"/>
<text x="636.4" y="34.3" font-size="13.2" text-anchor="start" fill="#f0f0f0" font-weight="normal" textLength="40.3" lengthAdjust="spacingAndGlyphs" stroke="#f0f0f0" stroke-width="0.28">Delta C</text>
<text x="667.5" y="321.3" font-size="13.4" text-anchor="middle" fill="#f0f0f0" font-weight="normal" stroke="#f0f0f0" stroke-width="0.28">White</text>
<rect x="619.4" y="137.2" width="96" height="36.2" fill="url(#dcb)" stroke="#0a0a0a" stroke-width="1.4"/>
<rect x="773.2" y="39.3" width="122.5" height="268.3" fill="#262626"/>
<line x1="773.2" y1="84.0" x2="895.7" y2="84.0" stroke="#9c9c9c" stroke-width="1.3"/>
<line x1="773.2" y1="128.7" x2="895.7" y2="128.7" stroke="#9c9c9c" stroke-width="1.3"/>
<line x1="773.2" y1="173.4" x2="895.7" y2="173.4" stroke="#9c9c9c" stroke-width="1.3"/>
<line x1="773.2" y1="218.1" x2="895.7" y2="218.1" stroke="#9c9c9c" stroke-width="1.3"/>
<line x1="773.2" y1="262.9" x2="895.7" y2="262.9" stroke="#9c9c9c" stroke-width="1.3"/>
<rect x="773.2" y="39.3" width="122.5" height="268.3" fill="none" stroke="#b4b4b4" stroke-width="1.3"/>
<line x1="768.2" y1="39.2" x2="773.2" y2="39.2" stroke="#b4b4b4" stroke-width="1.3"/>
<text x="768.6" y="43.8" font-size="13" text-anchor="end" fill="#f0f0f0" font-weight="normal" stroke="#f0f0f0" stroke-width="0.28">15</text>
<line x1="768.2" y1="84.0" x2="773.2" y2="84.0" stroke="#b4b4b4" stroke-width="1.3"/>
<text x="768.6" y="88.5" font-size="13" text-anchor="end" fill="#f0f0f0" font-weight="normal" stroke="#f0f0f0" stroke-width="0.28">10</text>
<line x1="768.2" y1="128.7" x2="773.2" y2="128.7" stroke="#b4b4b4" stroke-width="1.3"/>
<text x="768.6" y="133.3" font-size="13" text-anchor="end" fill="#f0f0f0" font-weight="normal" stroke="#f0f0f0" stroke-width="0.28">5</text>
<line x1="768.2" y1="173.4" x2="773.2" y2="173.4" stroke="#b4b4b4" stroke-width="1.3"/>
<text x="768.6" y="178.0" font-size="13" text-anchor="end" fill="#f0f0f0" font-weight="normal" stroke="#f0f0f0" stroke-width="0.28">0</text>
<line x1="768.2" y1="218.1" x2="773.2" y2="218.1" stroke="#b4b4b4" stroke-width="1.3"/>
<text x="768.6" y="222.7" font-size="13" text-anchor="end" fill="#f0f0f0" font-weight="normal" stroke="#f0f0f0" stroke-width="0.28">-5</text>
<line x1="768.2" y1="262.9" x2="773.2" y2="262.9" stroke="#b4b4b4" stroke-width="1.3"/>
<text x="768.6" y="267.5" font-size="13" text-anchor="end" fill="#f0f0f0" font-weight="normal" stroke="#f0f0f0" stroke-width="0.28">-10</text>
<line x1="768.2" y1="307.6" x2="773.2" y2="307.6" stroke="#b4b4b4" stroke-width="1.3"/>
<text x="768.6" y="312.2" font-size="13" text-anchor="end" fill="#f0f0f0" font-weight="normal" stroke="#f0f0f0" stroke-width="0.28">-15</text>
<line x1="773.2" y1="307.6" x2="773.2" y2="312.6" stroke="#b4b4b4" stroke-width="1.4"/>
<line x1="895.7" y1="307.6" x2="895.7" y2="312.6" stroke="#b4b4b4" stroke-width="1.4"/>
<text x="803.8" y="34.3" font-size="13.2" text-anchor="start" fill="#f0f0f0" font-weight="normal" textLength="40.3" lengthAdjust="spacingAndGlyphs" stroke="#f0f0f0" stroke-width="0.28">Delta H</text>
<text x="835.1" y="321.3" font-size="13.4" text-anchor="middle" fill="#f0f0f0" font-weight="normal" stroke="#f0f0f0" stroke-width="0.28">White</text>
<rect x="789.0" y="172.3" width="94" height="1.4" fill="#050505"/>
<rect x="411.3" y="335.8" width="500.9" height="137.7" fill="#000"/>
<rect x="425.2" y="341.6" width="52.6" height="112" fill="#bebebe"/>
<rect x="425.2" y="341.6" width="52.6" height="55.6" fill="#c5b9bb"/>
<rect x="425.2" y="341.6" width="52.6" height="112" fill="none" stroke="#dcdcdc" stroke-width="1.3"/>
<text x="451.9" y="466.8" font-size="10.7" text-anchor="middle" fill="#fff" font-weight="normal" stroke="#fff" stroke-width="0.35">White</text>
<rect x="486.6" y="341.6" width="52.6" height="112" fill="#be0000"/>
<rect x="486.6" y="341.6" width="52.6" height="55.6" fill="#b80202"/>
<rect x="486.6" y="341.6" width="52.6" height="112" fill="none" stroke="#dcdcdc" stroke-width="1.3"/>
<text x="513.2" y="466.8" font-size="10.7" text-anchor="middle" fill="#fff" font-weight="normal" stroke="#fff" stroke-width="0.35">Red</text>
<rect x="547.9" y="341.6" width="52.6" height="112" fill="#00be00"/>
<rect x="547.9" y="341.6" width="52.6" height="55.6" fill="#30b606"/>
<rect x="547.9" y="341.6" width="52.6" height="112" fill="none" stroke="#dcdcdc" stroke-width="1.3"/>
<text x="574.6" y="466.8" font-size="10.7" text-anchor="middle" fill="#fff" font-weight="normal" stroke="#fff" stroke-width="0.35">Green</text>
<rect x="609.2" y="341.6" width="52.6" height="112" fill="#0000be"/>
<rect x="609.2" y="341.6" width="52.6" height="55.6" fill="#0408b4"/>
<rect x="609.2" y="341.6" width="52.6" height="112" fill="none" stroke="#dcdcdc" stroke-width="1.3"/>
<text x="636.0" y="466.8" font-size="10.7" text-anchor="middle" fill="#fff" font-weight="normal" stroke="#fff" stroke-width="0.35">Blue</text>
<rect x="670.6" y="341.6" width="52.6" height="112" fill="#00bebe"/>
<rect x="670.6" y="341.6" width="52.6" height="55.6" fill="#34b8b8"/>
<rect x="670.6" y="341.6" width="52.6" height="112" fill="none" stroke="#dcdcdc" stroke-width="1.3"/>
<text x="697.3" y="466.8" font-size="10.7" text-anchor="middle" fill="#fff" font-weight="normal" stroke="#fff" stroke-width="0.35">Cyan</text>
<rect x="732.0" y="341.6" width="52.6" height="112" fill="#be00be"/>
<rect x="732.0" y="341.6" width="52.6" height="55.6" fill="#b80cb6"/>
<rect x="732.0" y="341.6" width="52.6" height="112" fill="none" stroke="#dcdcdc" stroke-width="1.3"/>
<text x="758.7" y="466.8" font-size="10.7" text-anchor="middle" fill="#fff" font-weight="normal" stroke="#fff" stroke-width="0.35">Magenta</text>
<rect x="793.3" y="341.6" width="52.6" height="112" fill="#bebe00"/>
<rect x="793.3" y="341.6" width="52.6" height="55.6" fill="#c0b804"/>
<rect x="793.3" y="341.6" width="52.6" height="112" fill="none" stroke="#dcdcdc" stroke-width="1.3"/>
<text x="820.0" y="466.8" font-size="10.7" text-anchor="middle" fill="#fff" font-weight="normal" stroke="#fff" stroke-width="0.35">Yellow</text>
<rect x="854.6" y="341.6" width="52.6" height="112" fill="#f6f6f6"/>
<rect x="854.6" y="341.6" width="52.6" height="55.6" fill="#fff2f6"/>
<rect x="854.6" y="341.6" width="52.6" height="112" fill="none" stroke="#dcdcdc" stroke-width="1.3"/>
<text x="881.4" y="466.8" font-size="10.7" text-anchor="middle" fill="#fff" font-weight="normal" stroke="#fff" stroke-width="0.35">100W</text>
<text transform="translate(422.2,381.5) rotate(-90)" font-size="10.5" font-weight="bold" fill="#fff" textLength="30" lengthAdjust="spacingAndGlyphs">Actual</text>
<text transform="translate(422.2,443.5) rotate(-90)" font-size="10.5" font-weight="bold" fill="#fff" textLength="29" lengthAdjust="spacingAndGlyphs">Target</text>
<text x="1212.7" y="33.8" font-size="13.4" text-anchor="middle" fill="#f0f0f0" font-weight="normal" textLength="71.4" lengthAdjust="spacingAndGlyphs" stroke="#f0f0f0" stroke-width="0.28">CIE 1976 u'v'</text>
<rect x="955.5" y="37.3" width="543.0" height="418.2" fill="none" stroke="#b4b4b4" stroke-width="1.4"/>
<line x1="955.6" y1="455.5" x2="955.6" y2="460.5" stroke="#b4b4b4" stroke-width="1.4"/>
<text x="955.6" y="473.6" font-size="12.6" text-anchor="middle" fill="#f0f0f0" font-weight="normal" stroke="#f0f0f0" stroke-width="0.28">0</text>
<line x1="951.0" y1="455.6" x2="955.5" y2="455.6" stroke="#b4b4b4" stroke-width="1.4"/>
<text x="951.0" y="460.0" font-size="12.6" text-anchor="end" fill="#f0f0f0" font-weight="normal" stroke="#f0f0f0" stroke-width="0.28">0</text>
<line x1="1000.8" y1="455.5" x2="1000.8" y2="460.5" stroke="#b4b4b4" stroke-width="1.4"/>
<text x="1000.8" y="473.6" font-size="12.6" text-anchor="middle" fill="#f0f0f0" font-weight="normal" stroke="#f0f0f0" stroke-width="0.28">0,05</text>
<line x1="951.0" y1="420.9" x2="955.5" y2="420.9" stroke="#b4b4b4" stroke-width="1.4"/>
<text x="951.0" y="425.3" font-size="12.6" text-anchor="end" fill="#f0f0f0" font-weight="normal" stroke="#f0f0f0" stroke-width="0.28">0,05</text>
<line x1="1045.9" y1="455.5" x2="1045.9" y2="460.5" stroke="#b4b4b4" stroke-width="1.4"/>
<text x="1045.9" y="473.6" font-size="12.6" text-anchor="middle" fill="#f0f0f0" font-weight="normal" stroke="#f0f0f0" stroke-width="0.28">0,1</text>
<line x1="951.0" y1="386.2" x2="955.5" y2="386.2" stroke="#b4b4b4" stroke-width="1.4"/>
<text x="951.0" y="390.6" font-size="12.6" text-anchor="end" fill="#f0f0f0" font-weight="normal" stroke="#f0f0f0" stroke-width="0.28">0,1</text>
<line x1="1091.1" y1="455.5" x2="1091.1" y2="460.5" stroke="#b4b4b4" stroke-width="1.4"/>
<text x="1091.1" y="473.6" font-size="12.6" text-anchor="middle" fill="#f0f0f0" font-weight="normal" stroke="#f0f0f0" stroke-width="0.28">0,15</text>
<line x1="951.0" y1="351.4" x2="955.5" y2="351.4" stroke="#b4b4b4" stroke-width="1.4"/>
<text x="951.0" y="355.8" font-size="12.6" text-anchor="end" fill="#f0f0f0" font-weight="normal" stroke="#f0f0f0" stroke-width="0.28">0,15</text>
<line x1="1136.3" y1="455.5" x2="1136.3" y2="460.5" stroke="#b4b4b4" stroke-width="1.4"/>
<text x="1136.3" y="473.6" font-size="12.6" text-anchor="middle" fill="#f0f0f0" font-weight="normal" stroke="#f0f0f0" stroke-width="0.28">0,2</text>
<line x1="951.0" y1="316.7" x2="955.5" y2="316.7" stroke="#b4b4b4" stroke-width="1.4"/>
<text x="951.0" y="321.1" font-size="12.6" text-anchor="end" fill="#f0f0f0" font-weight="normal" stroke="#f0f0f0" stroke-width="0.28">0,2</text>
<line x1="1181.4" y1="455.5" x2="1181.4" y2="460.5" stroke="#b4b4b4" stroke-width="1.4"/>
<text x="1181.4" y="473.6" font-size="12.6" text-anchor="middle" fill="#f0f0f0" font-weight="normal" stroke="#f0f0f0" stroke-width="0.28">0,25</text>
<line x1="951.0" y1="282.0" x2="955.5" y2="282.0" stroke="#b4b4b4" stroke-width="1.4"/>
<text x="951.0" y="286.4" font-size="12.6" text-anchor="end" fill="#f0f0f0" font-weight="normal" stroke="#f0f0f0" stroke-width="0.28">0,25</text>
<line x1="1226.6" y1="455.5" x2="1226.6" y2="460.5" stroke="#b4b4b4" stroke-width="1.4"/>
<text x="1226.6" y="473.6" font-size="12.6" text-anchor="middle" fill="#f0f0f0" font-weight="normal" stroke="#f0f0f0" stroke-width="0.28">0,3</text>
<line x1="951.0" y1="247.2" x2="955.5" y2="247.2" stroke="#b4b4b4" stroke-width="1.4"/>
<text x="951.0" y="251.7" font-size="12.6" text-anchor="end" fill="#f0f0f0" font-weight="normal" stroke="#f0f0f0" stroke-width="0.28">0,3</text>
<line x1="1271.8" y1="455.5" x2="1271.8" y2="460.5" stroke="#b4b4b4" stroke-width="1.4"/>
<text x="1271.8" y="473.6" font-size="12.6" text-anchor="middle" fill="#f0f0f0" font-weight="normal" stroke="#f0f0f0" stroke-width="0.28">0,35</text>
<line x1="951.0" y1="212.5" x2="955.5" y2="212.5" stroke="#b4b4b4" stroke-width="1.4"/>
<text x="951.0" y="216.9" font-size="12.6" text-anchor="end" fill="#f0f0f0" font-weight="normal" stroke="#f0f0f0" stroke-width="0.28">0,35</text>
<line x1="1316.9" y1="455.5" x2="1316.9" y2="460.5" stroke="#b4b4b4" stroke-width="1.4"/>
<text x="1316.9" y="473.6" font-size="12.6" text-anchor="middle" fill="#f0f0f0" font-weight="normal" stroke="#f0f0f0" stroke-width="0.28">0,4</text>
<line x1="951.0" y1="177.8" x2="955.5" y2="177.8" stroke="#b4b4b4" stroke-width="1.4"/>
<text x="951.0" y="182.2" font-size="12.6" text-anchor="end" fill="#f0f0f0" font-weight="normal" stroke="#f0f0f0" stroke-width="0.28">0,4</text>
<line x1="1362.1" y1="455.5" x2="1362.1" y2="460.5" stroke="#b4b4b4" stroke-width="1.4"/>
<text x="1362.1" y="473.6" font-size="12.6" text-anchor="middle" fill="#f0f0f0" font-weight="normal" stroke="#f0f0f0" stroke-width="0.28">0,45</text>
<line x1="951.0" y1="143.1" x2="955.5" y2="143.1" stroke="#b4b4b4" stroke-width="1.4"/>
<text x="951.0" y="147.5" font-size="12.6" text-anchor="end" fill="#f0f0f0" font-weight="normal" stroke="#f0f0f0" stroke-width="0.28">0,45</text>
<line x1="1407.2" y1="455.5" x2="1407.2" y2="460.5" stroke="#b4b4b4" stroke-width="1.4"/>
<text x="1407.2" y="473.6" font-size="12.6" text-anchor="middle" fill="#f0f0f0" font-weight="normal" stroke="#f0f0f0" stroke-width="0.28">0,5</text>
<line x1="951.0" y1="108.4" x2="955.5" y2="108.4" stroke="#b4b4b4" stroke-width="1.4"/>
<text x="951.0" y="112.8" font-size="12.6" text-anchor="end" fill="#f0f0f0" font-weight="normal" stroke="#f0f0f0" stroke-width="0.28">0,5</text>
<line x1="1452.4" y1="455.5" x2="1452.4" y2="460.5" stroke="#b4b4b4" stroke-width="1.4"/>
<text x="1452.4" y="473.6" font-size="12.6" text-anchor="middle" fill="#f0f0f0" font-weight="normal" stroke="#f0f0f0" stroke-width="0.28">0,55</text>
<line x1="951.0" y1="73.6" x2="955.5" y2="73.6" stroke="#b4b4b4" stroke-width="1.4"/>
<text x="951.0" y="78.0" font-size="12.6" text-anchor="end" fill="#f0f0f0" font-weight="normal" stroke="#f0f0f0" stroke-width="0.28">0,55</text>
<text x="1339.8" y="60.2" font-size="14" text-anchor="start" fill="#fff" font-weight="normal" textLength="97.5" lengthAdjust="spacingAndGlyphs" stroke="#fff" stroke-width="0.28">Gamut coverage:</text>
<rect x="1444.4" y="42" width="49.3" height="21.2" fill="url(#dd)"/>
<text x="1448.0" y="59.6" font-size="15.5" text-anchor="start" fill="#fff" font-weight="normal" textLength="20.7" lengthAdjust="spacingAndGlyphs" stroke="#fff" stroke-width="0.28">u'v'</text>
<path d="M1481.6 50.4h8l-4 4.8z" fill="#0c0c0c"/>
<rect x="1281" y="428" width="215" height="22" fill="#303030"/>
<text x="1282.4" y="445.6" font-size="16.6" text-anchor="start" fill="#fff" font-weight="normal" textLength="188.0" lengthAdjust="spacingAndGlyphs" stroke="#fff" stroke-width="0.28" xml:space="preserve">Gamut Coverage:  95,9%</text>
<rect x="1356.1" y="84.4" width="12" height="12" fill="none" stroke="#f8f8f8" stroke-width="1.55"/>
<rect x="1061.9" y="56.9" width="12" height="12" fill="none" stroke="#f8f8f8" stroke-width="1.55"/>
<rect x="1107.5" y="338.1" width="12" height="12" fill="none" stroke="#f8f8f8" stroke-width="1.55"/>
<rect x="1073.9" y="131.3" width="12" height="12" fill="none" stroke="#f8f8f8" stroke-width="1.55"/>
<rect x="1224.5" y="218.6" width="12" height="12" fill="none" stroke="#f8f8f8" stroke-width="1.55"/>
<rect x="1133.2" y="63.5" width="12" height="12" fill="none" stroke="#f8f8f8" stroke-width="1.55"/>
<circle cx="1363.4" cy="90.7" r="3.7" fill="#c80000" stroke="#0c0c0c" stroke-width="1.3"/>
<circle cx="1073.7" cy="64.1" r="3.7" fill="#10b000" stroke="#0c0c0c" stroke-width="1.3"/>
<circle cx="1113.0" cy="340.1" r="3.7" fill="#0000b8" stroke="#0c0c0c" stroke-width="1.3"/>
<circle cx="1084.5" cy="138.0" r="3.7" fill="#00b8b8" stroke="#0c0c0c" stroke-width="1.3"/>
<circle cx="1230.4" cy="220.8" r="3.7" fill="#b800b8" stroke="#0c0c0c" stroke-width="1.3"/>
<circle cx="1143.7" cy="70.5" r="3.7" fill="#b8b000" stroke="#0c0c0c" stroke-width="1.3"/>
<rect x="1128.1" y="123.1" width="11.2" height="11.2" fill="none" stroke="#060606" stroke-width="2"/>
<circle cx="1138.1" cy="129.5" r="3.8" fill="#f4f4f4" stroke="#0c0c0c" stroke-width="1.4"/>
<text x="105.0" y="540.6" font-size="23.6" text-anchor="start" fill="#fff" font-weight="normal" textLength="185.5" lengthAdjust="spacingAndGlyphs" stroke="#fff" stroke-width="0.28">Current Reading</text>
<text x="105.0" y="600.2" font-size="20.2" text-anchor="start" fill="#fff" font-weight="normal" textLength="74.7" lengthAdjust="spacingAndGlyphs" stroke="#fff" stroke-width="0.28">x: 0,319</text>
<text x="237.4" y="600.2" font-size="20.2" text-anchor="start" fill="#fff" font-weight="normal" textLength="87.6" lengthAdjust="spacingAndGlyphs" stroke="#fff" stroke-width="0.28">y: 0,3256</text>
<text x="105.0" y="635.3" font-size="20.2" text-anchor="start" fill="#fff" font-weight="normal" textLength="81.5" lengthAdjust="spacingAndGlyphs" stroke="#fff" stroke-width="0.28">fL: 89,09</text>
<text x="105.0" y="670.0" font-size="20.2" text-anchor="start" fill="#fff" font-weight="normal" textLength="134.6" lengthAdjust="spacingAndGlyphs" stroke="#fff" stroke-width="0.28">cd/m²: 305,24</text>
<text x="488.2" y="513.3" font-size="13" text-anchor="middle" fill="#f0f0f0" font-weight="normal" textLength="70.0" lengthAdjust="spacingAndGlyphs" stroke="#f0f0f0" stroke-width="0.28">RGB Balance</text>
<rect x="395.3" y="517.5" width="211.90000000000003" height="154.20000000000005" fill="#262626"/>
<line x1="395.3" y1="534.1" x2="607.2" y2="534.1" stroke="#9c9c9c" stroke-width="1.3"/>
<line x1="390.8" y1="534.1" x2="395.3" y2="534.1" stroke="#b4b4b4" stroke-width="1.3"/>
<text x="390.7" y="538.4" font-size="12.4" text-anchor="end" fill="#f0f0f0" font-weight="normal" stroke="#f0f0f0" stroke-width="0.28">104</text>
<line x1="395.3" y1="564.8" x2="607.2" y2="564.8" stroke="#9c9c9c" stroke-width="1.3"/>
<line x1="390.8" y1="564.8" x2="395.3" y2="564.8" stroke="#b4b4b4" stroke-width="1.3"/>
<text x="390.7" y="569.1" font-size="12.4" text-anchor="end" fill="#f0f0f0" font-weight="normal" stroke="#f0f0f0" stroke-width="0.28">102</text>
<line x1="395.3" y1="595.5" x2="607.2" y2="595.5" stroke="#9c9c9c" stroke-width="1.3"/>
<line x1="390.8" y1="595.5" x2="395.3" y2="595.5" stroke="#b4b4b4" stroke-width="1.3"/>
<text x="390.7" y="599.8" font-size="12.4" text-anchor="end" fill="#f0f0f0" font-weight="normal" stroke="#f0f0f0" stroke-width="0.28">100</text>
<line x1="395.3" y1="626.2" x2="607.2" y2="626.2" stroke="#9c9c9c" stroke-width="1.3"/>
<line x1="390.8" y1="626.2" x2="395.3" y2="626.2" stroke="#b4b4b4" stroke-width="1.3"/>
<text x="390.7" y="630.5" font-size="12.4" text-anchor="end" fill="#f0f0f0" font-weight="normal" stroke="#f0f0f0" stroke-width="0.28">98</text>
<line x1="395.3" y1="656.9" x2="607.2" y2="656.9" stroke="#9c9c9c" stroke-width="1.3"/>
<line x1="390.8" y1="656.9" x2="395.3" y2="656.9" stroke="#b4b4b4" stroke-width="1.3"/>
<text x="390.7" y="661.2" font-size="12.4" text-anchor="end" fill="#f0f0f0" font-weight="normal" stroke="#f0f0f0" stroke-width="0.28">96</text>
<rect x="395.3" y="517.5" width="211.90000000000003" height="154.20000000000005" fill="none" stroke="#b4b4b4" stroke-width="1.3"/>
<line x1="395.3" y1="671.7" x2="395.3" y2="676.2" stroke="#b4b4b4" stroke-width="1.3"/>
<line x1="607.2" y1="671.7" x2="607.2" y2="676.2" stroke="#b4b4b4" stroke-width="1.3"/>
<rect x="416.6" y="551.0" width="55.3" height="121.6" fill="url(#rr)" stroke="#0a0a0a" stroke-width="1.5"/>
<rect x="417.3" y="670.5" width="53.9" height="2.2" fill="url(#rr)"/>
<rect x="472.6" y="607.8" width="55.7" height="64.8" fill="url(#rg)" stroke="#0a0a0a" stroke-width="1.5"/>
<rect x="473.3" y="670.5" width="54.3" height="2.2" fill="url(#rg)"/>
<rect x="529.0" y="593.2" width="55.2" height="79.4" fill="url(#rb)" stroke="#0a0a0a" stroke-width="1.5"/>
<rect x="529.7" y="670.5" width="53.8" height="2.2" fill="url(#rb)"/>
<text x="501.8" y="684.2" font-size="13.2" text-anchor="middle" fill="#f0f0f0" font-weight="normal" stroke="#f0f0f0" stroke-width="0.28">White</text>
<text x="776.7" y="507.2" font-size="13.4" text-anchor="middle" fill="#f0f0f0" font-weight="normal" textLength="63.6" lengthAdjust="spacingAndGlyphs" stroke="#f0f0f0" stroke-width="0.28">CIE 1931 xy</text>
<rect x="632" y="510.5" width="289.5" height="168.5" fill="none" stroke="#c8c8c8" stroke-width="1.3"/>
<rect x="771.5" y="588.3" width="11.4" height="11.4" fill="none" stroke="#0a0a0a" stroke-width="1.7"/>
<circle cx="804.8" cy="605.8" r="3.4" fill="#f6f2f2" stroke="#333" stroke-width="1.1"/>
<circle cx="812.4" cy="605.8" r="3.4" fill="#b4b4b4" stroke="#333" stroke-width="1.1"/></svg>
<div id="tblbox"><div id="tbl"><div class="th"><span class="rl"></span><span class="hc" style="width:65.9px">White</span><span class="hc" style="width:57.9px">Red</span><span class="hc" style="width:65.9px">Green</span><span class="hc" style="width:57.9px">Blue</span><span class="hc" style="width:65.9px">Cyan</span><span class="hc" style="width:60.699999999999996px">Magenta</span><span class="hc" style="width:65.30000000000001px">Yellow</span><span class="hc" style="width:65.9px">100W</span></div><div class="tr dk"><span class="rl">x</span><span class="tc" style="width:65.9px">0,3190</span><span class="tc" style="width:57.9px">0,6417</span><span class="tc" style="width:65.9px">0,3108</span><span class="tc" style="width:57.9px">0,1511</span><span class="tc" style="width:65.9px">0,2313</span><span class="tc" style="width:60.699999999999996px">0,3246</span><span class="tc" style="width:65.30000000000001px">0,4257</span><span class="tc" style="width:65.9px">0,3187</span></div><div class="tr lt"><span class="rl">y</span><span class="tc" style="width:65.9px">0,3256</span><span class="tc" style="width:57.9px">0,3300</span><span class="tc" style="width:65.9px">0,5903</span><span class="tc" style="width:57.9px">0,0631</span><span class="tc" style="width:65.9px">0,3263</span><span class="tc" style="width:60.699999999999996px">0,1590</span><span class="tc" style="width:65.30000000000001px">0,5002</span><span class="tc" style="width:65.9px">0,3254</span></div><div class="tr dk"><span class="rl">Y</span><span class="tc" style="width:65.9px">305,2415</span><span class="tc" style="width:57.9px">63,4372</span><span class="tc" style="width:65.9px">210,3438</span><span class="tc" style="width:57.9px">22,2376</span><span class="tc" style="width:65.9px">237,1537</span><span class="tc" style="width:60.699999999999996px">85,9006</span><span class="tc" style="width:65.30000000000001px">271,4551</span><span class="tc" style="width:65.9px">605,2184</span></div><div class="tr lt"><span class="rl">Target Y</span><span class="tc" style="width:65.9px">304,3007</span><span class="tc" style="width:57.9px">64,7114</span><span class="tc" style="width:65.9px">217,6232</span><span class="tc" style="width:57.9px">21,9661</span><span class="tc" style="width:65.9px">239,5893</span><span class="tc" style="width:60.699999999999996px">86,6775</span><span class="tc" style="width:65.30000000000001px">282,3346</span><span class="tc" style="width:65.9px">605,2184</span></div><div class="tr dk"><span class="rl">ΔE 2000</span><span class="tc" style="width:65.9px">5,3358</span><span class="tc" style="width:57.9px">0,3944</span><span class="tc" style="width:65.9px">1,6723</span><span class="tc" style="width:57.9px">0,7648</span><span class="tc" style="width:65.9px">1,6640</span><span class="tc" style="width:60.699999999999996px">0,7735</span><span class="tc" style="width:65.30000000000001px">1,8969</span><span class="tc" style="width:65.9px">5,7012</span></div><div class="tr lt"><span class="rl">ΔE ITP</span><span class="tc" style="width:65.9px">5,4624</span><span class="tc" style="width:57.9px">1,8712</span><span class="tc" style="width:65.9px">5,0194</span><span class="tc" style="width:57.9px">3,7200</span><span class="tc" style="width:65.9px">5,1267</span><span class="tc" style="width:60.699999999999996px">3,1284</span><span class="tc" style="width:65.30000000000001px">4,9779</span><span class="tc" style="width:65.9px">4,4012</span></div></div><div id="vs"><div class="sb" style="top:2.5px"><svg width="14" height="14"><path d="M3 9.5L7 4.5L11 9.5z" fill="#3a3a3a"/></svg></div><div class="thumb" style="top:18px;height:90px"></div><div class="sb" style="top:128.5px"><svg width="14" height="14"><path d="M3 4.5L7 9.5L11 4.5z" fill="#3a3a3a"/></svg></div></div>
<div id="hs"><div class="sb" style="left:1px;top:1px"><svg width="14" height="14"><path d="M9.5 3L4.5 7L9.5 11z" fill="#3a3a3a"/></svg></div><div class="thumb" style="left:17px;top:1.5px;width:462px;height:13px"></div><div class="sb" style="left:522.5px;top:1px"><svg width="14" height="14"><path d="M4.5 3L9.5 7L4.5 11z" fill="#3a3a3a"/></svg></div></div></div>
<div class="pb sel" style="left:0.9px"><div class="ps" style="background:#bebebe"></div><div class="pl">White</div></div><div class="pb" style="left:158.5px"><div class="ps" style="background:#be0000"></div><div class="pl">Red</div></div><div class="pb" style="left:316.0px"><div class="ps" style="background:#00be00"></div><div class="pl">Green</div></div><div class="pb" style="left:473.6px"><div class="ps" style="background:#0000be"></div><div class="pl">Blue</div></div><div class="pb" style="left:631.2px"><div class="ps" style="background:#00bebe"></div><div class="pl">Cyan</div></div><div class="pb" style="left:788.7px"><div class="ps" style="background:#be00be"></div><div class="pl">Magenta</div></div><div class="pb" style="left:946.3px"><div class="ps" style="background:#bebe00"></div><div class="pl">Yellow</div></div><div class="pb" style="left:1103.9px"><div class="ps" style="background:#ffffff"></div><div class="pl">100W</div></div>
<svg width="1600" height="758" viewBox="0 0 1600 758" style="position:absolute;left:0;top:0;will-change:transform;font-family:'Liberation Sans',sans-serif"><defs><linearGradient id="cg" x1="0" y1="0" x2="0" y2="1"><stop offset="0" stop-color="#6e6e6e"/><stop offset="1" stop-color="#a6a6a6"/></linearGradient><linearGradient id="g1" x1="0" y1="0" x2="0" y2="1"><stop offset="0" stop-color="#a4a4a4"/><stop offset="1" stop-color="#6c6c6c"/></linearGradient><linearGradient id="g2" x1="0" y1="0" x2="0" y2="1"><stop offset="0" stop-color="#c0c0c0"/><stop offset="0.12" stop-color="#a2a2a2"/><stop offset="1" stop-color="#666"/></linearGradient><linearGradient id="g3" x1="0" y1="0" x2="0" y2="1"><stop offset="0" stop-color="#9c9c9c"/><stop offset="1" stop-color="#848484"/></linearGradient><linearGradient id="g4" x1="0" y1="0" x2="0" y2="1"><stop offset="0" stop-color="#7a7a7a"/><stop offset="1" stop-color="#5c5c5c"/></linearGradient><linearGradient id="g5" x1="0" y1="0" x2="0" y2="1"><stop offset="0" stop-color="#b4b4b4"/><stop offset="0.5" stop-color="#a0a0a0"/><stop offset="0.5" stop-color="#8c8c8c"/><stop offset="1" stop-color="#969696"/></linearGradient></defs>
<path d="M1263.5 712.5V698a4.5 4.5 0 0 1 4.5-4.5H1309a4.5 4.5 0 0 1 4.500 4.500V712.500z" fill="url(#g3)"/>
<rect x="1263.500" y="713.300" width="50" height="45" fill="url(#g4)"/>
<line x1="1263.500" y1="712.900" x2="1313.500" y2="712.900" stroke="#444" stroke-width="1"/>
<circle cx="1288.7" cy="702.8" r="7.2" fill="url(#cg)"/><circle cx="1288.7" cy="702.8" r="6.7" fill="none" stroke="#9a9a9a" stroke-opacity=".5" stroke-width="1"/><path d="M1283.600 705.300L1288.700 699.700L1293.800 705.300z" fill="#333"/>
<rect x="1273.200" y="719.800" width="30.400" height="29.800" rx="4.500" fill="url(#g5)" stroke="#0c0c0c" stroke-width="2"/>
<rect x="1281.800" y="728.400" width="14.200" height="13.600" fill="#050505"/>
<rect x="1314.6" y="693" width="47.5" height="31.5" fill="url(#g1)"/>
<line x1="1361.6" y1="693" x2="1361.6" y2="724.5" stroke="#3c3c3c" stroke-width="1"/>
<line x1="1315.1" y1="693" x2="1315.1" y2="724.5" stroke="#b0b0b0" stroke-opacity=".5" stroke-width="1"/>
<rect x="1362.1" y="693" width="47.200000000000045" height="31.5" fill="url(#g1)"/>
<line x1="1408.8" y1="693" x2="1408.8" y2="724.5" stroke="#3c3c3c" stroke-width="1"/>
<line x1="1362.6" y1="693" x2="1362.6" y2="724.5" stroke="#b0b0b0" stroke-opacity=".5" stroke-width="1"/>
<rect x="1409.3" y="693" width="47.40000000000009" height="31.5" fill="url(#g1)"/>
<line x1="1456.2" y1="693" x2="1456.2" y2="724.5" stroke="#3c3c3c" stroke-width="1"/>
<line x1="1409.8" y1="693" x2="1409.8" y2="724.5" stroke="#b0b0b0" stroke-opacity=".5" stroke-width="1"/>
<rect x="1456.7" y="693" width="46.700000000000045" height="31.5" fill="url(#g1)"/>
<line x1="1502.9" y1="693" x2="1502.9" y2="724.5" stroke="#3c3c3c" stroke-width="1"/>
<line x1="1457.2" y1="693" x2="1457.2" y2="724.5" stroke="#b0b0b0" stroke-opacity=".5" stroke-width="1"/>
<rect x="1503.4" y="693" width="47.0" height="31.5" fill="url(#g1)"/>
<line x1="1549.9" y1="693" x2="1549.9" y2="724.5" stroke="#3c3c3c" stroke-width="1"/>
<line x1="1503.9" y1="693" x2="1503.9" y2="724.5" stroke="#b0b0b0" stroke-opacity=".5" stroke-width="1"/>
<circle cx="1338.6499999999999" cy="709" r="10" fill="url(#cg)"/><circle cx="1338.6499999999999" cy="709" r="9.5" fill="none" stroke="#9a9a9a" stroke-opacity=".5" stroke-width="1"/><rect x="1334.6499999999999" y="705" width="8" height="8" fill="#3a3a3a"/>
<circle cx="1385.9999999999998" cy="709" r="10" fill="url(#cg)"/><circle cx="1385.9999999999998" cy="709" r="9.5" fill="none" stroke="#9a9a9a" stroke-opacity=".5" stroke-width="1"/><path d="M1382.7999999999997 704L1390.9999999999998 709L1382.7999999999997 714z" fill="#383838"/>
<circle cx="1433.3" cy="709" r="10" fill="url(#cg)"/><circle cx="1433.3" cy="709" r="9.5" fill="none" stroke="#9a9a9a" stroke-opacity=".5" stroke-width="1"/><path d="M1430.5 704h-2v10h2M1436.1 704h2v10h-2" fill="none" stroke="#383838" stroke-width="1.600"/><path d="M1430.7 709h5.200" stroke="#383838" stroke-width="1.400" stroke-dasharray="1.400 1"/>
<circle cx="1480.3500000000001" cy="708" r="10" fill="url(#cg)"/><circle cx="1480.3500000000001" cy="708" r="9.5" fill="none" stroke="#9a9a9a" stroke-opacity=".5" stroke-width="1"/><path d="M1480.3500000000001 708c-1.300-2.200-2.400-2.900-3.600-2.900a2.900 2.900 0 0 0 0 5.800c1.200 0 2.300-.7 3.600-2.900c1.300-2.200 2.400-2.900 3.600-2.900a2.900 2.900 0 0 1 0 5.800c-1.200 0-2.300-.7-3.600-2.900z" fill="none" stroke="#383838" stroke-width="1.900"/>
<circle cx="1527.2" cy="709" r="10" fill="url(#cg)"/><circle cx="1527.2" cy="709" r="9.5" fill="none" stroke="#9a9a9a" stroke-opacity=".5" stroke-width="1"/><path d="M1522.0 708.2a5.300 5.300 0 0 1 9-3" fill="none" stroke="#383838" stroke-width="2.200"/><path d="M1532.4 709.8a5.300 5.300 0 0 1-9 3" fill="none" stroke="#383838" stroke-width="2.200"/><path d="M1533.0 702.8v4.600h-4.600z" fill="#383838"/><path d="M1521.4 715.2v-4.600h4.600z" fill="#383838"/>
<rect x="1314.600" y="725.700" width="142" height="32.300" fill="url(#g2)"/>
<rect x="1457.400" y="725.700" width="141" height="32.300" fill="url(#g2)"/>
<line x1="1314.600" y1="725.200" x2="1598.400" y2="725.200" stroke="#3a3a3a" stroke-width="1.200"/>
<line x1="1457" y1="725.700" x2="1457" y2="758" stroke="#333" stroke-width="1.200"/>
<circle cx="1346.9" cy="742" r="10" fill="url(#cg)"/><circle cx="1346.9" cy="742" r="9.5" fill="none" stroke="#9a9a9a" stroke-opacity=".5" stroke-width="1"/><path d="M1345.800 737.600l-3.600 4.400l3.600 4.400M1350.600 737.600l-3.600 4.400l3.600 4.400" fill="none" stroke="#383838" stroke-width="1.500"/>
<circle cx="1568.4" cy="742" r="10" fill="url(#cg)"/><circle cx="1568.4" cy="742" r="9.5" fill="none" stroke="#9a9a9a" stroke-opacity=".5" stroke-width="1"/><path d="M1564.800 737.600l3.600 4.400l-3.600 4.400M1569.600 737.600l3.600 4.400l-3.600 4.400" fill="none" stroke="#383838" stroke-width="1.500"/>
<text x="1375.300" y="750.200" font-size="21.500" fill="#c8c8c8" textLength="51.500" lengthAdjust="spacingAndGlyphs" stroke="#c8c8c8" stroke-width=".3">Back</text>
<text x="1375.300" y="749.200" font-size="21.500" fill="#333" textLength="51.500" lengthAdjust="spacingAndGlyphs" stroke="#333" stroke-width=".5">Back</text>
<text x="1486.200" y="750.200" font-size="21.500" fill="#c8c8c8" textLength="53.600" lengthAdjust="spacingAndGlyphs" stroke="#c8c8c8" stroke-width=".3">Next</text>
<text x="1486.200" y="749.200" font-size="21.500" fill="#333" textLength="53.600" lengthAdjust="spacingAndGlyphs" stroke="#333" stroke-width=".5">Next</text>
<g transform="translate(1573.200,707.400)" fill="#ee1010" stroke="#ee1010" stroke-width="1.4" stroke-linejoin="round"><path d="M-2.5 -13.4h5l-1.3 13.4l1.3 13.4h-5l1.3-13.4z" transform="rotate(0)"/><path d="M-2.5 -13.4h5l-1.3 13.4l1.3 13.4h-5l1.3-13.4z" transform="rotate(60)"/><path d="M-2.5 -13.4h5l-1.3 13.4l1.3 13.4h-5l1.3-13.4z" transform="rotate(120)"/></g></svg>
</body></html>
